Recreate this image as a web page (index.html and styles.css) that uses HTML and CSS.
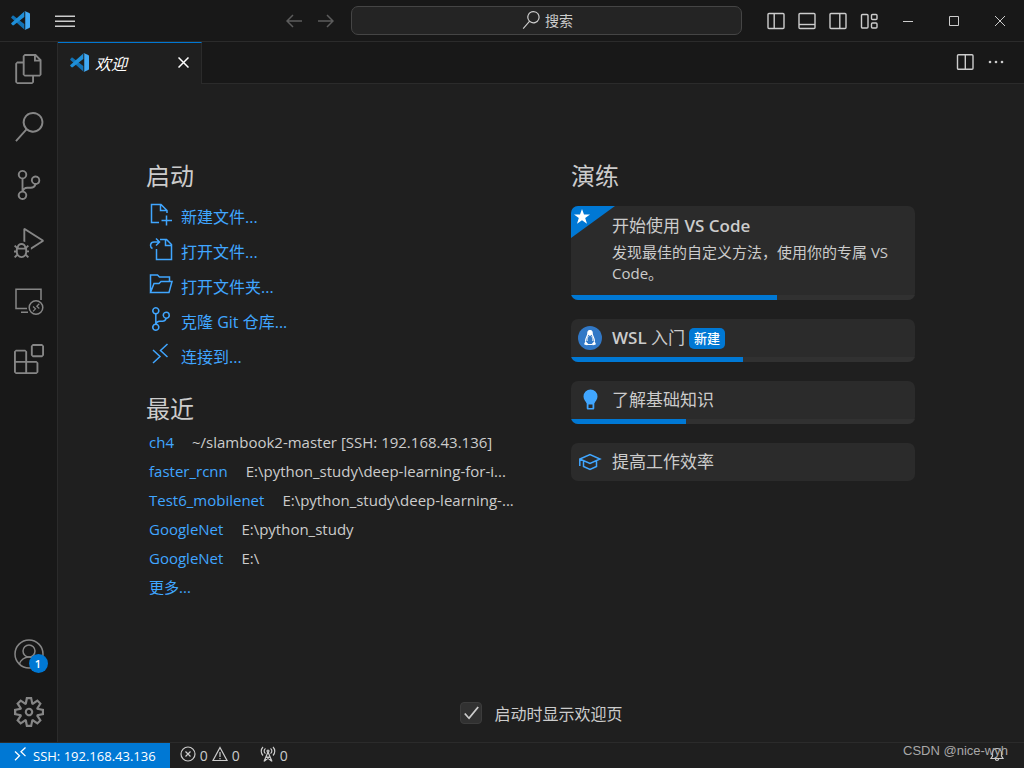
FILE: index.html
```html
<!DOCTYPE html>
<html lang="zh-CN">
<head>
<meta charset="utf-8">
<title>欢迎 - Visual Studio Code</title>
<link rel="stylesheet" href="styles.css">
</head>
<body>
<svg class="defs" aria-hidden="true">
  <symbol id="vscode" viewBox="0 0 100 100">
    <path fill="#1272b5" d="M2 37c-2-2-2-4 0-6l6-6c2-1 4-1 6 0l56 43v29L2 37z"/>
    <path fill="#1f8fd8" d="M2 63c-2 2-2 4 0 6l6 6c2 1 4 1 6 0l56-43V3L2 63z"/>
    <path fill="#41a9f4" d="M70 2l5-1 21 10c3 1 4 4 4 6v66c0 3-1 5-4 6L75 99l-5-1c3 1 5-1 5-4V6c0-3-2-5-5-4z"/>
  </symbol>
  <symbol id="branch" viewBox="0 0 24 24"><path d="M21.007 8.222A3.738 3.738 0 0 0 15.045 5.2a3.737 3.737 0 0 0 1.156 6.583 2.988 2.988 0 0 1-2.668 1.67h-2.99a4.456 4.456 0 0 0-2.989 1.165V7.4a3.737 3.737 0 1 0-1.494 0v9.117a3.776 3.776 0 1 0 1.816.099 2.99 2.99 0 0 1 2.668-1.667h2.99a4.484 4.484 0 0 0 4.223-3.039 3.736 3.736 0 0 0 3.25-3.687zM4.565 3.738a2.242 2.242 0 1 1 4.484 0 2.242 2.242 0 0 1-4.484 0zm4.484 16.441a2.242 2.242 0 1 1-4.484 0 2.242 2.242 0 0 1 4.484 0zm8.221-9.715a2.242 2.242 0 1 1 0-4.485 2.242 2.242 0 0 1 0 4.485z"/></symbol>
  <symbol id="search" viewBox="0 0 24 24"><path d="M15.25 0a8.25 8.25 0 0 0-6.18 13.72L1 22.88l1.12 1 8.05-9.12A8.251 8.251 0 1 0 15.25.01V0zm0 15a6.75 6.75 0 1 1 0-13.5 6.75 6.75 0 0 1 0 13.5z"/></symbol>
  <symbol id="remote" viewBox="0 0 16 16"><path fill="none" stroke="currentColor" stroke-width="1.3" d="M3 5.500l4.500 4.300L3 14.200M13.500 1.500L9 5.800l4.500 4.300"/></symbol>
</svg>

<header class="titlebar">
  <div class="title-left">
    <svg class="logo"><use href="#vscode"/></svg>
    <button class="icon-btn" aria-label="菜单"><svg class="line heavy" width="20" height="20" viewBox="0 0 20 20"><path d="M0 5.200h20M0 10.200h20M0 15.200h20"/></svg></button>
    <nav class="history" aria-label="历史">
      <button class="icon-btn" aria-label="后退"><svg class="line heavy" width="16" height="14" viewBox="0 0 16 14"><path d="M16 7H1M7 1L1 7l6 6"/></svg></button>
      <button class="icon-btn" aria-label="前进"><svg class="line heavy" width="16" height="14" viewBox="0 0 16 14"><path d="M0 7h15M9 1l6 6-6 6"/></svg></button>
    </nav>
  </div>
  <button class="command"><svg class="fill" width="18" height="18"><use href="#search"/></svg>搜索</button>
  <div class="title-right">
    <div class="layout-controls">
      <button class="icon-btn" aria-label="主侧栏"><svg class="line panel" width="18" height="18" viewBox="0 0 18 18"><rect x="1" y="1.500" width="16" height="15" rx="1"/><path d="M7.200 1.500v15"/></svg></button>
      <button class="icon-btn" aria-label="面板"><svg class="line panel" width="18" height="18" viewBox="0 0 18 18"><rect x="1" y="1.500" width="16" height="15" rx="1"/><path d="M1 12.500h16"/></svg></button>
      <button class="icon-btn" aria-label="辅助侧栏"><svg class="line panel" width="18" height="18" viewBox="0 0 18 18"><rect x="1" y="1.500" width="16" height="15" rx="1"/><path d="M10.800 1.500v15"/></svg></button>
      <button class="icon-btn" aria-label="自定义布局"><svg class="line panel" width="18" height="18" viewBox="0 0 18 18"><rect x="1.500" y="2.500" width="6.500" height="13.500" rx="1"/><rect x="11.500" y="2.500" width="5.500" height="5" rx="1"/><rect x="11.500" y="11" width="5.500" height="5" rx="1"/></svg></button>
    </div>
    <div class="window-controls">
      <button class="icon-btn" aria-label="最小化"><svg class="line" width="10" height="10" viewBox="0 0 10 10"><path d="M0 5.500h10"/></svg></button>
      <button class="icon-btn" aria-label="最大化"><svg class="line" width="10" height="10" viewBox="0 0 10 10"><path d="M.5.5h9v9h-9z"/></svg></button>
      <button class="icon-btn" aria-label="关闭"><svg class="line" width="10" height="10" viewBox="0 0 10 10"><path d="M0 0l10 10M10 0L0 10"/></svg></button>
    </div>
  </div>
</header>

<div class="workbench">
  <nav class="activity" aria-label="活动栏">
    <button class="icon-btn" aria-label="资源管理器"><svg class="fill" width="30" height="30" viewBox="0 0 24 24"><path d="M17.500 0h-9L7 1.500V6H2.500L1 7.500v15.070L2.500 24h12.070L16 22.570V18h4.700l1.300-1.430V4.500L17.500 0zm0 2.120l2.380 2.380H17.500V2.120zm-3 20.380h-12v-15H7v9.070L8.500 18h6v4.500zm6-6h-12v-15H16V6h4.500v10.500z"/></svg></button>
    <button class="icon-btn" aria-label="搜索"><svg class="fill" width="30" height="30"><use href="#search"/></svg></button>
    <button class="icon-btn" aria-label="源代码管理"><svg class="fill" width="30" height="30"><use href="#branch"/></svg></button>
    <button class="icon-btn" aria-label="运行和调试"><svg class="fill" width="30" height="30" viewBox="0 0 24 24"><path d="M10.940 13.500l-1.320 1.320a3.730 3.730 0 0 0-7.240 0L1.060 13.500 0 14.560l1.720 1.720-.22.22V18H0v1.500h1.500v.08c.077.489.214.966.41 1.420L0 22.940 1.060 24l1.650-1.650A4.308 4.308 0 0 0 6 24a4.310 4.310 0 0 0 3.290-1.650L10.940 24 12 22.940 10.090 21c.198-.464.336-.951.41-1.450v-.1H12V18h-1.500v-1.500l-.22-.22L12 14.560l-1.060-1.060zM6 13.500a2.250 2.250 0 0 1 2.250 2.250h-4.500A2.250 2.250 0 0 1 6 13.500zm3 6a3.330 3.330 0 0 1-3 3 3.330 3.330 0 0 1-3-3v-2.250h6v2.250zm14.760-9.900v1.260L13.500 17.370V15.600l8.500-5.370L9 2v9.460a5.070 5.070 0 0 0-1.500-.72V.63L8.640 0l15.120 9.600z"/></svg></button>
    <button class="icon-btn" aria-label="远程资源管理器"><svg class="line heavy" width="30" height="30" viewBox="0 0 30 30"><path d="M27 14V3.200H2V22.500h11M7 26.300h7"/><circle cx="22" cy="21.500" r="6.800"/><path d="M19 20.500l2.500 2.300-2.500 2.500M25.300 17.800l-2.500 2.400 2.500 2.300" stroke-width="1.200"/></svg></button>
    <button class="icon-btn" aria-label="扩展"><svg class="fill" width="30" height="30" viewBox="0 0 24 24"><path d="M13.500 1.500L15 0h7.500L24 1.500V9l-1.500 1.500H15L13.500 9V1.500zm1.500 0V9h7.500V1.500H15zM0 15V6l1.500-1.500H9L10.500 6v7.500H18l1.500 1.500v7.500L18 24H1.500L0 22.500V15zm9-1.500V6H1.500v7.500H9zM9 15H1.500v7.500H9V15zm1.500 7.500H18V15h-7.500v7.500z"/></svg></button>
    <button class="icon-btn account" aria-label="帐户"><svg class="line heavy" width="30" height="30" viewBox="0 0 30 30"><circle cx="15" cy="15" r="14"/><circle cx="15" cy="12" r="6"/><path d="M5.500 25c1-4 5-7 9.500-7s8.500 3 9.500 7"/></svg><span class="badge">1</span></button>
    <button class="icon-btn" aria-label="管理"><svg class="fill" width="30" height="30" viewBox="0 0 24 24"><path d="M19.850 8.750l4.150.83v4.840l-4.150.83 2.350 3.520-3.430 3.430-3.520-2.350-.83 4.150H9.580l-.83-4.150-3.520 2.350-3.430-3.430 2.350-3.520L0 14.420V9.580l4.150-.83L1.800 5.230 5.230 1.800l3.520 2.350L9.580 0h4.840l.83 4.150 3.520-2.350 3.430 3.430-2.350 3.520zm-1.570 5.070l4-.81v-2l-4-.81-.54-1.300 2.290-3.430-1.430-1.430-3.430 2.290-1.300-.54-.81-4h-2l-.81 4-1.300.54-3.430-2.290-1.430 1.430L6.380 8.900l-.54 1.300-4 .81v2l4 .81.54 1.300-2.290 3.430 1.430 1.430 3.430-2.290 1.300.54.81 4h2l.81-4 1.300-.54 3.430 2.290 1.430-1.430-2.290-3.430.54-1.300zm-8.186-4.672A3.430 3.430 0 0 1 12 8.570 3.440 3.440 0 0 1 15.430 12a3.430 3.430 0 1 1-5.336-2.852zm.956 4.274c.281.188.612.288.95.288A1.700 1.700 0 0 0 13.710 12a1.710 1.710 0 1 0-2.660 1.422z"/></svg></button>
  </nav>

  <main class="editor">
    <div class="tabs">
      <div class="tab">
        <svg class="logo"><use href="#vscode"/></svg>
        <span class="tab-name">欢迎</span>
        <button class="icon-btn" aria-label="关闭标签页"><svg class="line heavy" width="11" height="11" viewBox="0 0 11 11"><path d="M.5.5l10 10M10.500.5l-10 10"/></svg></button>
      </div>
      <div class="tab-actions">
        <button class="icon-btn" aria-label="拆分编辑器"><svg class="line panel" width="18" height="18" viewBox="0 0 18 18"><rect x="1.500" y="1.800" width="15.500" height="14.500" rx="1"/><path d="M9.300 1.800v14.500"/></svg></button>
        <button class="icon-btn" aria-label="更多操作"><svg class="fill" width="16" height="4" viewBox="0 0 16 4"><circle cx="2" cy="2" r="1.300"/><circle cx="8" cy="2" r="1.300"/><circle cx="14" cy="2" r="1.300"/></svg></button>
      </div>
    </div>

    <div class="welcome">
      <div class="columns">
        <div class="column">
          <section>
            <h2>启动</h2>
            <ul class="start">
              <li><a href="#"><svg class="line start-icon" viewBox="0 0 24 24"><path d="M10 20.500H2.500v-18h9.500l6 6V11M11.500 2.500v6H18M17.500 13.500v10M12.500 18.500h10.500"/></svg>新建文件...</a></li>
              <li><a href="#"><svg class="line start-icon" viewBox="0 0 24 24"><path d="M7.500 12v10.500h15V7.500l-5-5H11M16.500 2.500v6h6M3.500 11.500c-3-1.500-2.500-6.500 1.500-6.500h5M7 1.500L10.500 5 7 8.500"/></svg>打开文件...</a></li>
              <li><a href="#"><svg class="line start-icon" viewBox="0 0 24 24"><path d="M1.500 20V3h7l2 2h10v4M1.500 20.500l3.500-9h5l2-2h11l-3 11z"/></svg>打开文件夹...</a></li>
              <li><a href="#"><svg class="fill start-icon"><use href="#branch"/></svg>克隆 Git 仓库...</a></li>
              <li><a href="#"><svg class="line start-icon" viewBox="0 0 24 24"><path d="M4 8l7 6.500L4 21M18.500 2l-7 6.500 7 6.500"/></svg>连接到...</a></li>
            </ul>
          </section>
          <section>
            <h2>最近</h2>
            <ul class="recent">
              <li><a href="#">ch4</a><span>~/slambook2-master [SSH: 192.168.43.136]</span></li>
              <li><a href="#">faster_rcnn</a><span>E:\python_study\deep-learning-for-i...</span></li>
              <li><a href="#">Test6_mobilenet</a><span>E:\python_study\deep-learning-...</span></li>
              <li><a href="#">GoogleNet</a><span>E:\python_study</span></li>
              <li><a href="#">GoogleNet</a><span>E:\</span></li>
              <li><a href="#">更多...</a></li>
            </ul>
          </section>
        </div>

        <section class="column">
          <h2>演练</h2>
          <div class="cards">
            <button class="card featured">
              <svg class="ribbon" width="44" height="32" viewBox="0 0 44 32"><path fill="#0078d4" d="M0 0h44L0 32z"/><path fill="#fff" d="M11 3l2 5.600h6l-4.800 3.500 1.800 5.700-5-3.500-5 3.500 1.800-5.700L3 8.600h6z"/></svg>
              <span class="card-body">
                <span class="card-title">开始使用 <b>VS Code</b></span>
                <span class="card-text">发现最佳的自定义方法，使用你的专属 VS Code。</span>
              </span>
              <span class="track"><span class="bar" style="width:60%"></span></span>
            </button>
            <button class="card">
              <span class="card-row">
                <svg width="24" height="24" viewBox="0 0 24 24"><circle cx="12" cy="12" r="12" fill="#3178c6"/><path fill="none" stroke="#fff" stroke-width="1.2" d="M12 4.500c-1.700 0-2.300 1.200-2.200 3.200 0 2.300-2.500 4.300-2.300 7.800M12 4.500c1.700 0 2.300 1.200 2.200 3.200 0 2.300 2.500 4.300 2.300 7.800M10 18.500h4"/><path fill="#fff" d="M10 5.500c.5-1.500 3.500-1.500 4 0l.2 3L12 10 9.800 8.500zM7.500 15l2.800 3c0 1.500-1.500 1.500-4.300.3zM16.500 15l-2.800 3c0 1.500 1.500 1.500 4.300.3z"/><path fill="none" stroke="#fff" stroke-width=".8" d="M10.300 10c-1 2-1.300 3.500-1 5M13.700 10c1 2 1.300 3.500 1 5"/></svg>
                <span class="card-title"><b>WSL</b> 入门</span><span class="tag">新建</span>
              </span>
              <span class="track"><span class="bar" style="width:50%"></span></span>
            </button>
            <button class="card">
              <span class="card-row">
                <svg width="24" height="24" viewBox="0 0 24 24"><path fill="#40a6ff" d="M12.500 1.500a7 7 0 0 0-7 7c0 3 2 4.500 3.200 7v4.500c0 1 .5 1.500 1.500 1.500h4.600c1 0 1.500-.5 1.500-1.500v-4.500c1.200-2.500 3.200-4 3.200-7a7 7 0 0 0-7-7z"/><path fill="#2b2b2b" d="M10.500 16.500h4V20h-4z"/></svg>
                <span class="card-title">了解基础知识</span>
              </span>
              <span class="track"><span class="bar" style="width:33.300%"></span></span>
            </button>
            <button class="card">
              <span class="card-row">
                <svg class="line cap" width="24" height="24" viewBox="0 0 24 24"><path d="M1.800 16V9L12 4.500 22 9l-10 4.500L1.800 9M5.500 11v5.500l6.500 3 6.500-3V11"/></svg>
                <span class="card-title">提高工作效率</span>
              </span>
            </button>
          </div>
        </section>
      </div>
      <label class="startup"><input type="checkbox" checked>启动时显示欢迎页</label>
    </div>
  </main>
</div>

<footer class="status">
  <button class="remote"><svg width="16" height="16"><use href="#remote"/></svg>SSH: 192.168.43.136</button>
  <button class="problems">
    <svg class="line" width="16" height="16" viewBox="0 0 16 16"><circle cx="8" cy="8" r="7"/><path d="M5.500 5.500l5 5M10.500 5.500l-5 5"/></svg><span>0</span>
    <svg class="line" width="16" height="16" viewBox="0 0 16 16"><path d="M8 1.500l7 13H1zM8 6v5M8 12v1.200"/></svg><span>0</span>
  </button>
  <button class="ports"><svg class="line" width="16" height="16" viewBox="0 0 16 16"><path d="M8 6L4 15.500M8 6l4 9.500M6 11h4M4.500 15l5-4M11.500 15l-5-4M5.500 7.500a3 3 0 0 1 0-5M10.500 7.500a3 3 0 0 0 0-5M3 9.500a6 6 0 0 1 0-8.500M13 9.500A6 6 0 0 0 13 1"/><circle cx="8" cy="5" r="1"/></svg><span>0</span></button>
  <button class="bell" aria-label="通知"><svg class="line" width="16" height="16" viewBox="0 0 16 16"><path d="M3.500 7a4.500 4.500 0 0 1 9 0v3l1.500 2.500H2L3.500 10zM6.500 13a1.500 1.500 0 0 0 3 0"/></svg></button>
</footer>
<span class="watermark">CSDN @nice-wyh</span>
</body>
</html>
```
FILE: styles.css
```css
* { box-sizing: border-box; }

body {
  margin: 0;
  min-height: 100vh;
  display: flex;
  flex-direction: column;
  background: #1f1f1f;
  color: #ccc;
  font-family: "Open Sans", "Noto Sans CJK SC", sans-serif;
  font-size: 15px;
}

button {
  border: 0;
  padding: 0;
  background: none;
  color: inherit;
  font: inherit;
  text-align: left;
}

a { color: #40a6ff; text-decoration: none; }
ul { list-style: none; margin: 0; padding: 0; }
svg { flex: none; display: block; }
b { font-weight: 600; }

.defs { position: absolute; width: 0; height: 0; }
.line { fill: none; stroke: currentColor; stroke-width: 1; }
.heavy { stroke-width: 1.5; }
.panel { stroke-width: 1.4; }
.fill { fill: currentColor; }
.logo { width: 19px; height: 19px; }
.icon-btn { display: flex; align-items: center; justify-content: center; }

/* Title bar */
.titlebar {
  display: grid;
  grid-template-columns: 351px minmax(0, 1fr) 282px;
  align-items: center;
  height: 42px;
  background: #181818;
  border-bottom: 1px solid #2b2b2b;
}
.title-left { display: flex; align-items: center; gap: 25px; padding: 0 17px 0 11px; }
.history { display: flex; gap: 16px; margin-left: auto; color: #5c5c5c; }
.command {
  display: flex;
  align-items: center;
  justify-content: center;
  gap: 5px;
  height: 29px;
  padding: 0 0 2px 2px;
  border: 1px solid #454545;
  border-radius: 7px;
  background: #242424;
  font-size: 14px;
}
.title-right { display: flex; align-items: center; padding-left: 25px; }
.layout-controls { display: flex; gap: 13px; }
.window-controls { display: flex; flex: 1; justify-content: flex-end; gap: 36px; padding-right: 19px; }

/* Workbench */
.workbench { display: flex; flex: 1; }
.activity {
  display: flex;
  flex-direction: column;
  align-items: center;
  gap: 28px;
  width: 58px;
  padding: 12px 0 15px;
  background: #181818;
  border-right: 1px solid #2b2b2b;
  color: #868686;
}
.account { position: relative; margin-top: auto; }
.badge {
  position: absolute;
  left: 15px;
  top: 15px;
  width: 19px;
  border-radius: 10px;
  background: #0078d4;
  color: #fff;
  font-size: 11px;
  font-weight: 600;
  line-height: 19px;
  text-align: center;
}

.editor { display: flex; flex: 1; flex-direction: column; min-width: 0; }
.tabs {
  display: flex;
  justify-content: space-between;
  height: 42px;
  background: #181818;
  box-shadow: inset 0 -1px #2b2b2b;
}
.tab {
  display: flex;
  align-items: center;
  gap: 6px;
  width: 144px;
  padding: 0 12px 2px;
  background: #1f1f1f;
  border-top: 1px solid #0078d4;
  border-right: 1px solid #2b2b2b;
  color: #fff;
}
.tab-name { flex: 1; font-size: 16px; font-style: italic; }
.tab-actions { display: flex; gap: 14px; padding: 0 20px 2px 0; }

/* Welcome page */
.welcome {
  display: flex;
  flex: 1;
  flex-direction: column;
  justify-content: space-between;
  padding: 76px 109px 17px 88px;
}
.columns { display: grid; grid-template-columns: minmax(0, 1fr) minmax(0, 344px); gap: 57px; }
h2 { margin: 0; font-size: 24px; font-weight: 400; line-height: 32px; }
.start { padding: 6px 0 20px; font-size: 16px; }
.start a { display: flex; align-items: center; gap: 8px; padding-left: 3px; height: 35px; white-space: nowrap; }
.start-icon { width: 24px; height: 24px; stroke-width: 1.5; margin-bottom: 4px; }
.recent { padding: 3px 0 0 3px; }
.recent li { display: flex; gap: 18px; line-height: 29px; white-space: nowrap; }

.cards { display: flex; flex-direction: column; gap: 19px; padding-top: 14px; }
.card {
  position: relative;
  display: flex;
  flex-direction: column;
  overflow: hidden;
  border-radius: 7px;
  background: #2b2b2b;
}
.ribbon { position: absolute; left: 0; top: 0; }
.card-body { display: flex; flex-direction: column; padding: 8px 12px 11px 41px; }
.card-row { display: flex; align-items: center; padding: 0 7px; height: 38px; }
.card-title { font-size: 17px; line-height: 24px; }
.card-row .card-title { margin-left: 10px; }
.card-text { font-size: 15px; line-height: 21px; padding-top: 4px; }
.track { align-self: stretch; height: 5px; background: #313131; }
.bar { display: block; height: 5px; background: #0078d4; }
.cap { color: #40a6ff; stroke-width: 1.5; }
.tag {
  margin-left: 4px;
  padding: 0 5px;
  border-radius: 5px;
  background: #0078d4;
  color: #fff;
  font-size: 13px;
  font-weight: 500;
  line-height: 21px;
}

.startup { display: flex; align-items: center; align-self: center; gap: 12px; margin-left: 22px; font-size: 16px; }
.startup input {
  appearance: none;
  width: 22px;
  height: 22px;
  margin: 0;
  border: 1px solid #3c3c3c;
  border-radius: 4px;
  background: #313131;
}
.startup input::before {
  content: "";
  display: block;
  width: 100%;
  height: 100%;
  background: #ccc;
  clip-path: polygon(13% 55%, 20% 50%, 37% 70%, 80% 18%, 87% 23%, 38% 82%);
}

/* Status bar */
.status { display: flex; height: 26px; border-top: 1px solid #2b2b2b; background: #1f1f1f; font-size: 14px; }
.status button { display: flex; align-items: center; gap: 4px; }
.status svg { margin-bottom: 4px; stroke-width: 1.2; }
.status .remote { gap: 5px; padding: 0 14px 0 12px; background: #0078d4; color: #fff; font-size: 13px; }
.problems { margin-left: 10px; }
.ports { margin-left: 20px; }
.bell { margin-left: auto; padding-right: 19px; }

.watermark {
  position: absolute;
  right: 16px;
  bottom: 9px;
  color: #a8a8a8;
  font-family: "Liberation Sans", sans-serif;
  font-size: 13px;
  line-height: 16px;
}
```
